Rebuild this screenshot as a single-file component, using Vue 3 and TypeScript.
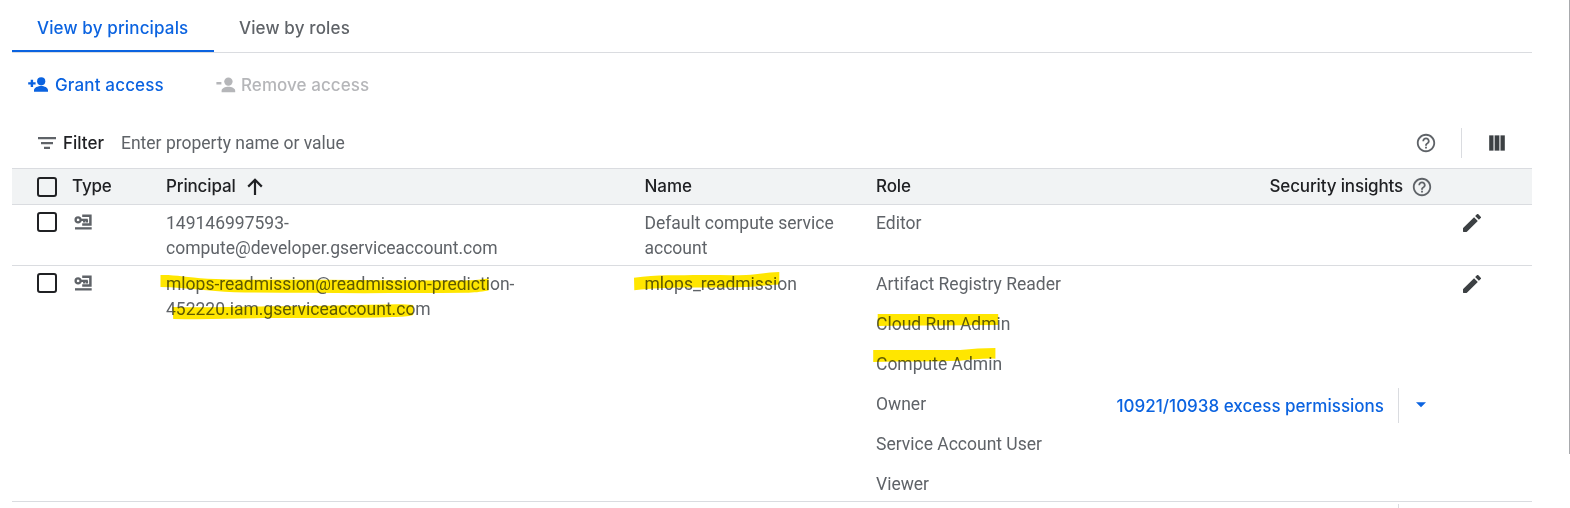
<script setup lang="ts">
interface Principal {
  id: string
  lines: string[]
  name: string
  roles: string[]
  insight?: { role: string; text: string }
}

const principals: Principal[] = [
  {
    id: 'compute',
    lines: ['149146997593-', 'compute@developer.gserviceaccount.com'],
    name: 'Default compute service account',
    roles: ['Editor'],
  },
  {
    id: 'mlops',
    lines: ['mlops-readmission@readmission-prediction-', '452220.iam.gserviceaccount.com'],
    name: 'mlops_readmission',
    roles: ['Artifact Registry Reader', 'Cloud Run Admin', 'Compute Admin', 'Owner', 'Service Account User', 'Viewer'],
    insight: { role: 'Owner', text: '10921/10938 excess permissions' },
  },
]

const helpPath =
  'M11 18h2v-2h-2v2zm1-16C6.48 2 2 6.48 2 12s4.48 10 10 10 10-4.48 10-10S17.52 2 12 2zm0 18c-4.41 0-8-3.59-8-8s3.59-8 8-8 8 3.59 8 8-3.59 8-8 8zm0-14c-2.21 0-4 1.79-4 4h2c0-1.1.9-2 2-2s2 .9 2 2c0 2-3 1.75-3 5h2c0-2.25 3-2.5 3-5 0-2.21-1.79-4-4-4z'
</script>

<template>
  <main class="page">
    <div class="content">
      <nav class="tabs">
        <div class="tab active">View by principals</div>
        <div class="tab">View by roles</div>
      </nav>

      <div class="actions">
        <div class="action grant">
          <svg width="20" height="16" viewBox="0 0 20 16"><circle cx="13.2" cy="4.3" r="4.1" /><path d="M6 14.8v-1.6c0-2.5 4-4.1 7.2-4.1s6.8 1.6 6.8 4.1v1.6zM2.7 2.7h2.4v2.5h2.5v2.3H5.1V10H2.7V7.5H.2V5.2h2.5z" /></svg>
          <span>Grant access</span>
        </div>
        <div class="action remove">
          <svg width="20" height="16" viewBox="0 0 20 16"><circle cx="12.4" cy="4.6" r="4.2" /><path d="M5.600 15.200v-1.500c0-2.500 3.700-4 6.800-4s6.800 1.500 6.800 4v1.500zM.4 5h5v2.400h-5z" /></svg>
          <span>Remove access</span>
        </div>
      </div>

      <div class="filter">
        <svg class="filter-icon" width="18" height="12" viewBox="0 0 18 12"><path d="M0 0h18v2.300H0zM3 5h12v2.200H3zM6 9.800h6V12H6z" /></svg>
        <span class="filter-label">Filter</span>
        <span class="placeholder">Enter property name or value</span>
        <svg class="help" width="22" height="22" viewBox="0 0 24 24"><path :d="helpPath" /></svg>
        <i class="divider" />
        <svg class="columns" width="16" height="16" viewBox="0 0 16 16"><path class="bars-bg" d="M0 .3h16v15.4H0z" /><path d="M.3.5h3.9v15H.3zM6 .5h4v15H6zM11.8.5h3.9v15h-3.9z" /></svg>
      </div>

      <section class="table">
        <header class="row head">
          <i class="checkbox" />
          <span>Type</span>
          <span class="sort">
            <span>Principal</span>
            <svg width="16" height="18" viewBox="0 0 16 18"><path d="M8 17V2M1.2 8.600L8 1.800l6.800 6.800" /></svg>
          </span>
          <span class="name-title">Name</span>
          <div class="role-title">
            <span>Role</span>
            <span class="security">
              <span>Security insights</span>
              <svg class="help" width="22" height="22" viewBox="0 0 24 24"><path :d="helpPath" /></svg>
            </span>
          </div>
        </header>

        <div v-for="p in principals" :key="p.id" class="row">
          <i class="checkbox" />
          <svg class="account" width="18" height="16" viewBox="0 0 18 16">
            <path class="ring" d="M4.100 3.400a2.500 2.500 0 1 1 0 5a2.500 2.500 0 0 1 0-5zM6.800 5.900h7M10.200 5.900v2.700M12.900 5.900v2.500" />
            <path class="frame" d="M8.200 1.800h8.200v8.700H8.200" />
            <path d="M1 13.200h16.700v2.300H1z" />
          </svg>
          <div class="text"><div v-for="l in p.lines" :key="l">{{ l }}</div></div>
          <div class="text name">{{ p.name }}</div>
          <div class="roles">
            <div v-for="r in p.roles" :key="r" class="role">
              <span class="text">{{ r }}</span>
              <div v-if="p.insight && p.insight.role === r" class="insight">
                <span class="text">{{ p.insight.text }}</span>
                <i class="split" />
                <svg width="10" height="6" viewBox="0 0 10 6"><path d="M0 .3h10L5 5.300z" /></svg>
              </div>
            </div>
          </div>
          <svg class="edit" width="18" height="18" viewBox="3 3 18 18"><path d="M3 17.460v3.040c0 .28.22.5.5.5h3.040c.13 0 .26-.05.35-.15L17.810 9.940l-3.750-3.750L3.150 17.100c-.1.1-.15.22-.15.36zM20.710 7.040a.996.996 0 0 0 0-1.410l-2.340-2.340a.996.996 0 0 0-1.410 0l-1.830 1.830 3.750 3.750 1.830-1.830z" /></svg>
        </div>
        <div class="next"><i /></div>
      </section>
    </div>
    <i class="edge" />

    <svg class="marker" width="1570" height="508" viewBox="0 0 1570 508">
      <path d="M160.500 275c16-.3 25 2.400 47 3.700 40 1.600 80 .8 120 1.100 50 .2 100 1.200 143 .4 7-.3 12-.8 18-1.700v12c-9 1.600-14 2-23 2.300-77 .5-157 .6-231-.5-27-1.100-46-4.700-74-5.300z" />
      <path d="M172.500 307c40 1 70-.8 110-.8 36 0 77-1.500 115-2 7 0 11 .3 15.700.8v10c-5 1.500-11 1.900-20 2-42 1.200-80 .8-120 1.100-37 .4-65 1.500-100 .8z" />
      <path d="M634 277.700c23-3 43-2.400 69-2.700 15-.1 29 .4 43-.1 12-.5 20-2.500 33.300-2.800v12.300c-13 .3-20 2.100-32 2.700-20 .8-40 0-63 .4-17 0-32 1-50 2.700z" />
      <path d="M877.700 314h120.500v11c-40 .4-80 .3-120.500 1z" />
      <path d="M873.200 350h87c12-1.500 23-1.900 35.200-2.100v10.800c-12-.5-22 .7-35 2-28 1-57 .3-87.200 1.200z" />
    </svg>
  </main>
</template>

<style>
body { margin: 0; background: #fff; }
</style>

<style scoped>
.page { position: relative; display: flex; justify-content: space-between; width: 1570px; height: 508px; overflow: hidden; background: #fff; color: #5f6368; font: 400 17.5px/25px Roboto, sans-serif; }
.content { width: 1520px; margin-left: 12px; }
svg { display: block; flex: none; }
svg path, svg circle { fill: currentColor; }
.tabs, .action, .filter-label, .head, .insight { font-family: Inter, "Open Sans", sans-serif; font-weight: 500; font-size: 17px; white-space: nowrap; }
.tabs { display: flex; height: 52px; border-bottom: 1px solid #dadce0; letter-spacing: .14px; }
.tab { box-sizing: border-box; height: 52px; padding: 16px 25px 0; }
.tab.active { width: 202px; color: #0b63e0; border-bottom: 2px solid #0b63e0; }
.actions { display: flex; height: 64px; align-items: center; }
.action { display: flex; align-items: center; gap: 7px; }
.grant { width: 172px; margin-left: 16px; color: #0b63e0; letter-spacing: .16px; }
.remove { gap: 5px; margin-left: 16px; color: #b5b6b9; letter-spacing: .06px; }
.filter { display: flex; height: 51px; align-items: center; padding: 0 27px 0 26px; }
.filter-label { color: #202124; margin-left: 7px; width: 58px; padding-top: 2px; }
.placeholder { padding-top: 2px; }
.help { color: #5f6368; }
.filter .help { margin-left: auto; }
.divider { width: 1px; height: 30px; margin: 0 27px 0 24px; background: #dadce0; }
.columns { color: #3c4043; }
.columns .bars-bg { fill: #b5b7b9; }
.row { display: grid; grid-template-columns: 35px 94px 478.500px 231.500px 587px 18px; padding: 5px 0 5px 25px; border-bottom: 1px solid #dadce0; align-items: start; }
.head { color: #202124; background: #f1f3f4; border-top: 1px solid #dadce0; height: 25px; align-items: center; letter-spacing: -.15px; }
.checkbox { box-sizing: border-box; width: 20px; height: 20px; border: 2px solid #202124; border-radius: 3px; margin-top: 2px; }
.head .checkbox { margin-top: 1px; }
.sort { display: flex; align-items: center; gap: 11px; }
.sort path { fill: none; stroke: #202124; stroke-width: 2.200; }
.name-title { letter-spacing: 0; }
.role-title { display: flex; justify-content: space-between; }
.security { display: flex; align-items: center; gap: 8px; padding-right: 30px; }
.account { margin-top: 4px; margin-left: 2px; }
.account .ring { fill: none; stroke: currentColor; stroke-width: 2.300; }
.account .frame { fill: none; stroke: currentColor; stroke-width: 2.500; }
.text { padding-top: 1px; margin-bottom: -1px; }
.name { width: 200px; }
.roles { display: flex; flex-direction: column; gap: 15px; }
.role { display: flex; justify-content: space-between; height: 25px; }
.insight { display: flex; align-items: center; height: 28px; color: #0b63e0; padding-right: 37px; }
.insight .text { padding-top: 2px; }
.split { width: 1px; height: 35px; margin: 0 17px 0 14px; background: #dadce0; }
.edit { color: #3c4043; margin-top: 4px; }
.next { display: flex; justify-content: flex-end; height: 6px; padding: 2px 133px 0 0; }
.next i { width: 1px; height: 4px; background: #dadce0; }
.edge { width: 1px; height: 454px; background: #a8aaad; }
.marker { position: absolute; left: 0; top: 0; color: #ffe600; mix-blend-mode: multiply; pointer-events: none; }
</style>
